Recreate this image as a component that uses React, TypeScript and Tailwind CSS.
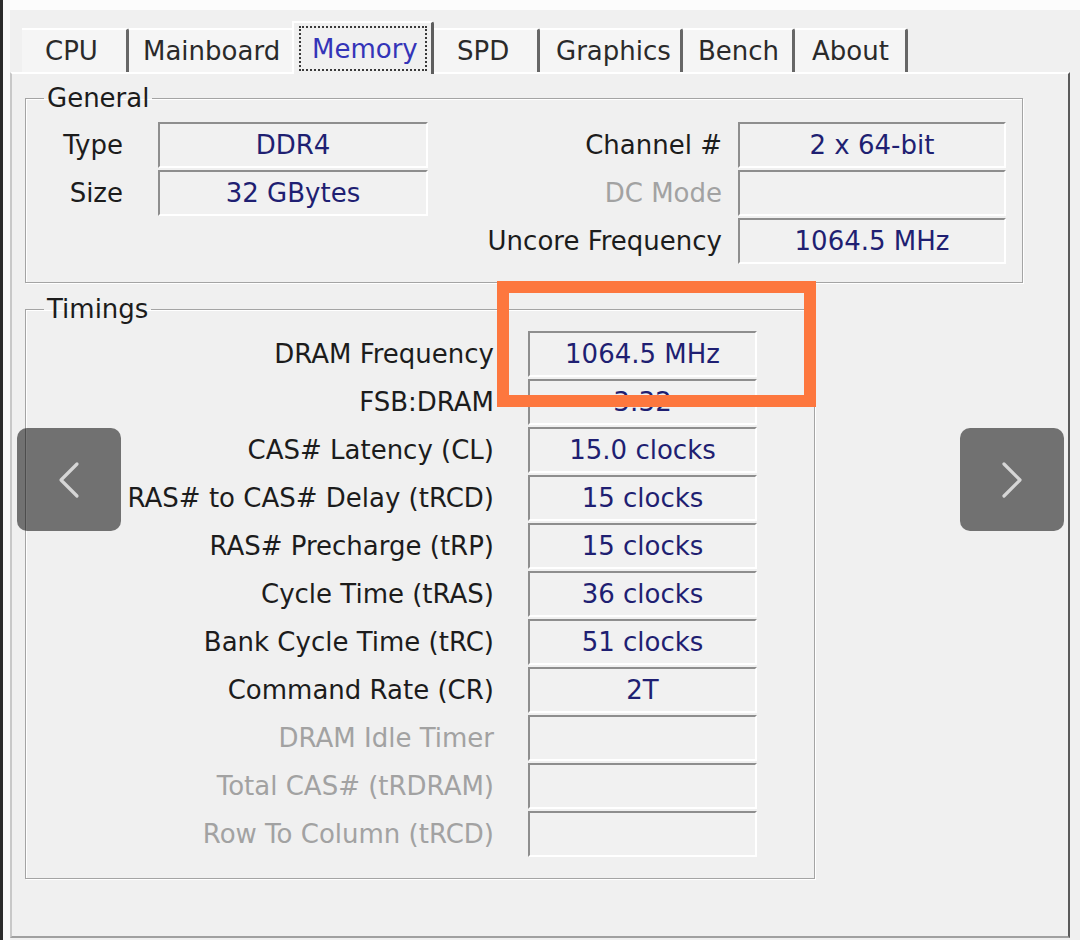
import React from "react";

const tabs = [
  { name: "CPU", w: "w-[107px]", pl: "pl-[23px]", sep: true },
  { name: "Mainboard", w: "w-[163px]", pl: "pl-[14px]", sep: false },
  { name: "Memory", w: "w-[142px]", pl: "pl-[5px]", sep: true, active: true },
  { name: "SPD", w: "w-[106px]", pl: "pl-[23px]", sep: true },
  { name: "Graphics", w: "w-[143px]", pl: "pl-[16px]", sep: true },
  { name: "Bench", w: "w-[112px]", pl: "pl-[15px]", sep: true },
  { name: "About", w: "w-[113px]", pl: "pl-[17px]", sep: true },
];

const timings = [
  { label: "DRAM Frequency", value: "1064.5 MHz" },
  { label: "FSB:DRAM", value: "3:32" },
  { label: "CAS# Latency (CL)", value: "15.0 clocks" },
  { label: "RAS# to CAS# Delay (tRCD)", value: "15 clocks" },
  { label: "RAS# Precharge (tRP)", value: "15 clocks" },
  { label: "Cycle Time (tRAS)", value: "36 clocks" },
  { label: "Bank Cycle Time (tRC)", value: "51 clocks" },
  { label: "Command Rate (CR)", value: "2T" },
  { label: "DRAM Idle Timer", value: "", off: true },
  { label: "Total CAS# (tRDRAM)", value: "", off: true },
  { label: "Row To Column (tRCD)", value: "", off: true },
];

function Field({ value, w }: { value: string; w: string }) {
  return (
    <div
      className={`${w} h-[46px] flex items-center justify-center border-2 border-t-[#8e8e8e] border-l-[#8e8e8e] border-r-white border-b-white bg-[#f1f1f1] text-[#1f1f72]`}
    >
      {value}
    </div>
  );
}

function Row({
  label,
  value,
  lw,
  gap,
  fw,
  off,
}: {
  label: string;
  value: string;
  lw: string;
  gap: string;
  fw: string;
  off?: boolean;
}) {
  return (
    <div className="flex items-center h-[46px]">
      <div
        className={`${lw} text-right whitespace-nowrap ${off ? "text-[#a2a2a2]" : "text-[#1c1c1c]"}`}
      >
        {label}
      </div>
      <div className={gap}>
        <Field value={value} w={fw} />
      </div>
    </div>
  );
}

function Chevron({ dir }: { dir: "left" | "right" }) {
  return (
    <svg width="24" height="38" viewBox="0 0 24 38" fill="none">
      <polyline
        points={dir === "left" ? "20,3 4,19 20,35" : "4,3 20,19 4,35"}
        stroke="#d6d6d6"
        strokeWidth="3.2"
        strokeLinecap="round"
        strokeLinejoin="round"
      />
    </svg>
  );
}

export default function App() {
  return (
    <div className="w-[1080px] h-[940px] bg-[#f0f0f0] relative overflow-hidden flex font-['DejaVu_Sans',sans-serif] text-[26px] leading-[28px] text-[#1c1c1c]">
      {/* window edge */}
      <div className="w-[3px] bg-[#2c2c2c]" />
      <div className="w-[7px] bg-[#fbfbfb]" />

      <div className="flex-1 flex flex-col">
        {/* top strip */}
        <div className="h-[10px] bg-[#fcfcfc]" />

        {/* tabs */}
        <div className="h-[62px] flex items-end pl-[12px]">
          {tabs.map((t) =>
            t.active ? (
              <div
                key={t.name}
                className={`${t.w} h-[53px] -mb-[2px] relative z-10 bg-[#f0f0f0] border-t-2 border-l-2 border-white border-r-[3px] border-r-[#5e5e5e] rounded-tr-[3px] pt-[3px] ${t.pl} pr-[4px]`}
              >
                <div className="h-[45px] border-2 border-dotted border-[#3a3a3a] flex items-center pl-[11px] text-[#3434b8]">
                  {t.name}
                </div>
              </div>
            ) : (
              <div
                key={t.name}
                className={`${t.w} h-[44px] flex items-center bg-[#f5f5f5] border-t-2 border-white ${t.pl} ${t.sep ? "border-r-[3px] border-r-[#666] rounded-tr-[3px]" : ""} text-[#2a2a2a]`}
              >
                {t.name}
              </div>
            )
          )}
        </div>

        {/* tab panel */}
        <div className="w-[1060px] h-[866px] border-2 border-t-white border-l-[#c8c8c8] border-r-[#5a5a5a] border-b-[#a0a0a0] bg-[#f0f0f0]">
          {/* General */}
          <fieldset className="ml-[13px] mt-[10px] w-[998px] min-w-0 border border-[#a4a4a4] shadow-[inset_1px_1px_0_#fff,1px_1px_0_#fff] pt-[10px] pb-[18px]">
            <legend className="ml-[18px] px-[3px] leading-[28px]">General</legend>
            <div className="flex">
              <div className="flex flex-col gap-[2px]">
                <Row label="Type" value="DDR4" lw="w-[97px]" gap="ml-[35px]" fw="w-[270px]" />
                <Row label="Size" value="32 GBytes" lw="w-[97px]" gap="ml-[35px]" fw="w-[270px]" />
              </div>
              <div className="ml-auto mr-[16px] flex flex-col gap-[2px]">
                <Row label="Channel #" value="2 x 64-bit" lw="w-[260px]" gap="ml-[16px]" fw="w-[268px]" />
                <Row label="DC Mode" value="" lw="w-[260px]" gap="ml-[16px]" fw="w-[268px]" off />
                <Row label="Uncore Frequency" value="1064.5 MHz" lw="w-[260px]" gap="ml-[16px]" fw="w-[268px]" />
              </div>
            </div>
          </fieldset>

          {/* Timings */}
          <fieldset className="ml-[13px] mt-[12px] w-[790px] min-w-0 border border-[#a4a4a4] shadow-[inset_1px_1px_0_#fff,1px_1px_0_#fff] pt-[8px] pb-[21px]">
            <legend className="ml-[18px] px-[3px] leading-[28px]">Timings</legend>
            <div className="flex flex-col gap-[2px]">
              {timings.map((r) => (
                <Row
                  key={r.label}
                  label={r.label}
                  value={r.value}
                  lw="w-[468px]"
                  gap="ml-[34px]"
                  fw="w-[229px]"
                  off={r.off}
                />
              ))}
            </div>
          </fieldset>
        </div>
      </div>

      {/* highlight box */}
      <div className="absolute left-[497px] top-[281px] w-[319px] h-[126px] border-[12px] border-[#fd773e]" />

      {/* carousel arrows */}
      <button className="absolute left-[17px] top-[428px] w-[104px] h-[103px] rounded-[10px] bg-black/[0.53] flex items-center justify-center">
        <Chevron dir="left" />
      </button>
      <button className="absolute left-[960px] top-[428px] w-[104px] h-[103px] rounded-[10px] bg-black/[0.53] flex items-center justify-center">
        <Chevron dir="right" />
      </button>
    </div>
  );
}
